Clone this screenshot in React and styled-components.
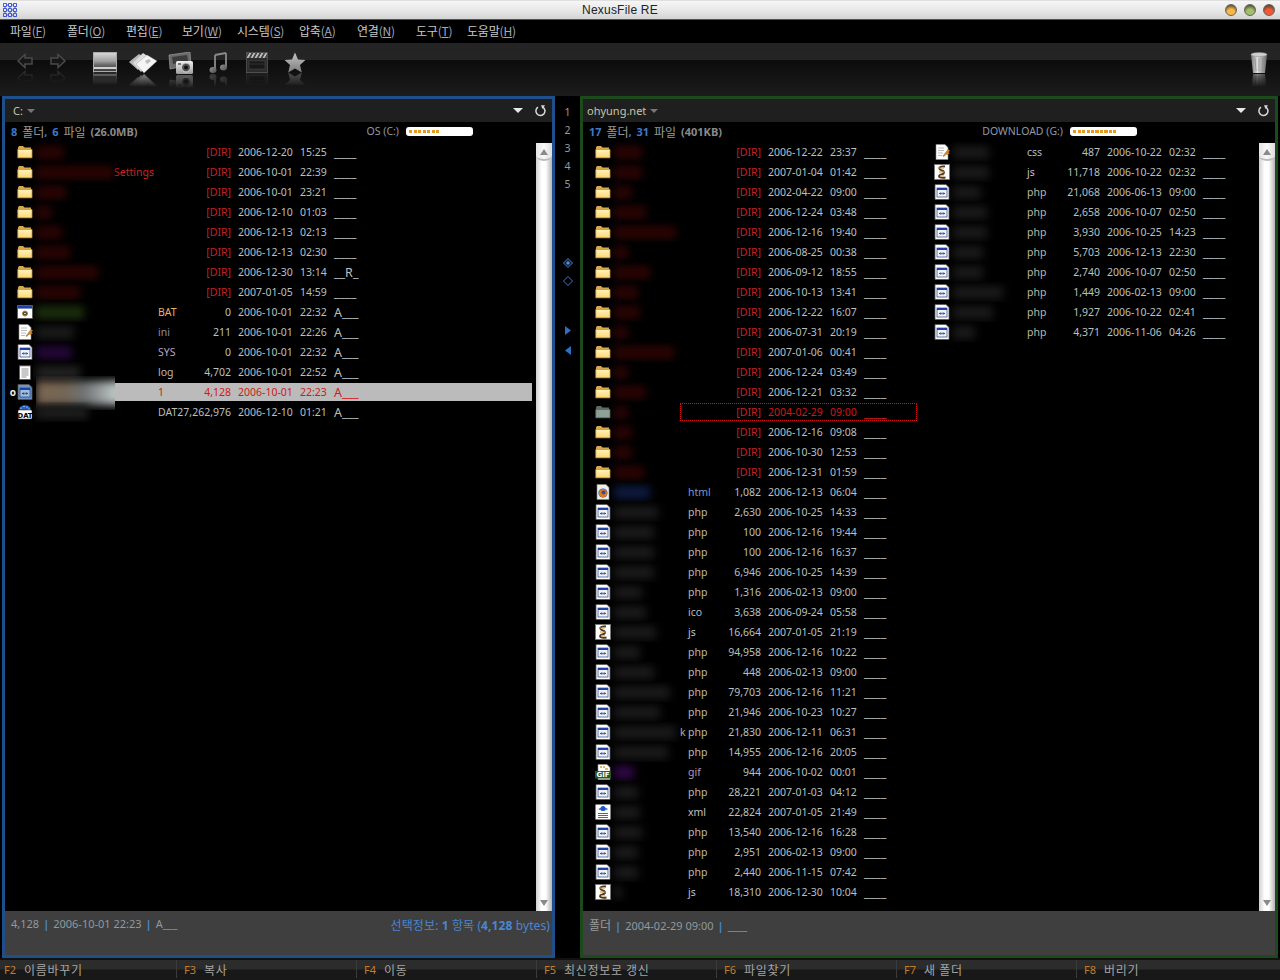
import React from "react";
import styled, { createGlobalStyle } from "styled-components";

const Global = createGlobalStyle`
  html, body { margin: 0; padding: 0; background: #000; }
  body { font-family: "Noto Sans", "Noto Sans CJK KR", sans-serif; font-size: 10.5px; color: #bbb; }
  #root { width: 1280px; height: 980px; overflow: hidden; }
  * { box-sizing: border-box; }
`;

const Win = styled.div`width:1280px;height:980px;display:flex;flex-direction:column;background:#000;`;
const TitleBar = styled.div`
  height:20px;flex:none;display:flex;align-items:center;justify-content:space-between;padding:0 5px 0 3px;position:relative;
  background:linear-gradient(#c8c8c8 0,#f6f6f6 1px,#e9e9e9 50%,#d4d4d4 100%);border-bottom:1px solid #555;
`;
const Title = styled.div`position:absolute;left:0;right:40px;top:3px;text-align:center;font:12px "Liberation Sans",sans-serif;letter-spacing:.2px;color:#222;`;
const WinBtns = styled.div`display:flex;gap:7px;`;
const WinBtn = styled.span`width:12px;height:12px;border-radius:50%;border:1px solid #665;background:radial-gradient(circle at 50% 80%,${p=>p.$c} 0,${p=>p.$c} 40%,#4a4030 90%);`;
const MenuBar = styled.div`height:23px;flex:none;display:flex;align-items:center;padding:0 0 2px 10px;background:#000;`;
const MenuItem = styled.div`width:${p=>p.$w}px;flex:none;font:12px "Noto Sans CJK KR","Noto Sans",sans-serif;color:#c8c8c8;letter-spacing:-.2px;white-space:nowrap;`;
const Mn = styled.span`color:#a0aab8;font-size:12px;u{text-underline-offset:1px;}`;
const Toolbar = styled.div`
  height:53px;flex:none;display:flex;align-items:flex-start;padding:9px 8px 0 8px;
  background:linear-gradient(#232323 0,#252525 17px,#0c0c0c 17px,#1c1c1c 100%);
`;
const Slot = styled.div`width:${p=>p.$w}px;flex:none;display:flex;flex-direction:column;align-items:center;`;
const Reflection = styled.div`
  height:14px;overflow:hidden;transform:scaleY(-1);opacity:.55;margin-top:-1px;
  mask-image:linear-gradient(to top,#000,transparent);-webkit-mask-image:linear-gradient(to top,#000,transparent);
  display:flex;align-items:flex-end;
`;
const Spacer = styled.div`width:${p=>p.$w}px;flex:none;`;
const Grow = styled.div`flex:1;`;
const Main = styled.div`flex:1;min-height:0;display:grid;grid-template-columns:553px 25px 698px;padding:0 2px;background:#000;`;
const Panel = styled.section`
  display:flex;flex-direction:column;min-height:0;border:3px solid ${p=>p.$c};background:#000;
`;
const PanelHead = styled.header`height:23px;flex:none;display:flex;align-items:center;padding:0 6px 0 ${p=>p.$pad}px;background:#1f1f1f;color:#c6c6a8;font-size:11px;`;
const Tri = styled.span`margin-left:4px;width:0;height:0;border-left:4px solid transparent;border-right:4px solid transparent;border-top:4px solid #777;`;
const BigTri = styled.span`margin-left:auto;margin-right:11px;width:0;height:0;border-left:5px solid transparent;border-right:5px solid transparent;border-top:5px solid #e8e8e8;`;
const Info = styled.div`height:20px;flex:none;display:flex;align-items:center;padding:0 0 2px 6px;background:#000;position:relative;font-size:11px;word-spacing:2px;`;
const KR = styled.span`color:#9a9a9a;font-family:"Noto Sans CJK KR",sans-serif;font-size:12px;`;
const Num = styled.b`color:#3f78cc;font-weight:700;`;
const Total = styled.b`color:#8a8a8a;font-weight:700;`;
const Drive = styled.div`margin-left:auto;margin-right:${p=>p.$mr}px;display:flex;align-items:center;color:#8f98a8;gap:7px;font-size:10.5px;word-spacing:0;`;
const DriveBar = styled.div`width:67px;height:9px;border-radius:3px;background:#fff;display:flex;align-items:center;padding:0 3px;`;
const DriveFill = styled.div`width:${p=>p.$w}px;height:3px;background:repeating-linear-gradient(90deg,#e49a20 0 3px,#fff 3px 4.5px);`;
const Body = styled.div`flex:1;min-height:0;display:flex;background:#000;`;
const List = styled.div`flex:1;min-width:0;display:flex;`;
const ListCol = styled.div`width:${p=>p.$w}px;flex:none;display:flex;flex-direction:column;`;
const Scroll = styled.div`
  width:16px;flex:none;margin-top:1px;display:flex;flex-direction:column;justify-content:space-between;align-items:center;padding:6px 0 5px;
  background:linear-gradient(90deg,#cfcfcf,#fff 35%,#fff 60%,#b4b4b4);
`;
const ScrollTop = styled.div`
  width:16px;height:18px;margin-top:-6px;padding-top:6px;display:flex;justify-content:center;border-bottom:2px solid #bbb;border-radius:0 0 50% 50%/0 0 5px 5px;
  background:linear-gradient(90deg,#e4e4e4,#f8f8f8 50%,#ddd);
`;
const UpTri = styled.span`width:0;height:0;border-left:4px solid transparent;border-right:4px solid transparent;border-bottom:6px solid #8a8a8a;`;
const DownTri = styled.span`width:0;height:0;border-left:4px solid transparent;border-right:4px solid transparent;border-top:6px solid #8a8a8a;`;
const Status = styled.footer`height:44px;flex:none;display:flex;align-items:flex-start;justify-content:space-between;padding:5px 2px 0 6px;background:#3f3f3f;color:#8d9aa0;font-size:11px;`;
const Sep = styled.b`color:#4c86c8;margin:0 4px;font-weight:700;`;
const SelInfo = styled.span`color:#4a86cf;font-size:12px;letter-spacing:.1px;font-family:"Noto Sans","Noto Sans CJK KR",sans-serif;b{font-weight:700;}`;
const Gutter = styled.aside`display:flex;flex-direction:column;align-items:center;padding:7px 0 0 0;color:#9a9a9a;font-size:10.5px;`;
const GutNum = styled.div`height:18px;line-height:18px;`;
const GutIcons = styled.div`margin-top:${p=>p.$mt}px;display:flex;flex-direction:column;align-items:center;gap:${p=>p.$gap}px;`;
const FnBar = styled.div`height:22px;flex:none;display:flex;padding:2px 0 2px;background:linear-gradient(#111 0,#111 2px,#2c2c2c 2px,#2c2c2c 11px,#181818 12px,#181818 100%);`;
const Fn = styled.div`
  width:${p=>p.$w}px;flex:none;display:flex;align-items:center;gap:8px;padding-left:${p=>p.$first?4:7}px;
  ${p=>p.$first?"":"border-left:1px solid #3a3a3a;"}font-size:12px;
`;
const FnKey = styled.span`color:#c67e26;font-size:11px;`;
const FnLabel = styled.span`color:#a4a4a4;font-family:"Noto Sans CJK KR",sans-serif;letter-spacing:.7px;`;

const RowWrap = styled.div`
  height:20px;flex:none;display:grid;position:relative;align-items:center;color:${p=>p.$selected?"#d01818":"#b9c0c0"};
  grid-template-columns:12px 16px ${p=>p.$name}px 18px 55px 69px 34px 1fr;
  ${p=>p.$selected?"background:linear-gradient(#bbb,#bbb) 110px 1px/calc(100% - 110px) 18px no-repeat;":""}
  ${p=>p.$current?"color:#d01818;":""}
`;
const Marker = styled.span`color:#eee;font-size:10px;font-weight:700;text-align:right;padding-right:1px;`;
const NameCell = styled.div`display:flex;align-items:center;height:20px;overflow:hidden;padding-left:3px;min-width:0;white-space:nowrap;`;
const Blob = styled.span`flex:none;display:block;width:${p=>p.$w}px;height:13px;background:${p=>p.$c};filter:blur(4px);`;
const SelClip = styled.div`position:absolute;left:31px;width:79px;top:-6px;bottom:-8px;overflow:hidden;display:flex;align-items:center;`;
const SelBlob = styled.span`flex:none;display:block;width:92px;height:24px;background:linear-gradient(90deg,#7c6654,#746654 30%,#6e7274 52%,#989c9c 70%,#bcc6c6 86%,#bbb);filter:blur(4px);`;
const Redtxt = styled.span`color:#d02420;`;
const Ext = styled.span`color:${p=>p.$c};white-space:nowrap;`;
const Size = styled.span`text-align:right;white-space:nowrap;color:${p=>p.$dir?"#c62020":"inherit"};`;
const DateCell = styled.span`padding-left:7px;white-space:nowrap;`;
const Time = styled.span`white-space:nowrap;`;
const Attr = styled.span`white-space:nowrap;font-size:12.5px;`;
const Cursor = styled.div`position:absolute;left:97px;right:5px;top:1px;bottom:1px;border:1px dotted #e01010;pointer-events:none;`;
const Stray = styled.span`position:absolute;left:97px;color:#aaa;`;

const Folder = ({dim}) => (
  <svg width="16" height="16" viewBox="0 0 16 16">
    <defs><linearGradient id="fo" x1="0" y1="0" x2="0" y2="1"><stop offset="0" stopColor="#fff4c0"/><stop offset="1" stopColor="#ffd870"/></linearGradient></defs>
    <path d="M1 3.500 L2 2 H6 L7.500 3.500 H14 V13.500 H1Z" fill={dim?"#5c6c60":"#d8a848"} />
    <path d="M.8 5.500 H15 V13.800 H.8Z" fill={dim?"#8ea096":"url(#fo)"} stroke={dim?"#56685c":"#c8963a"} strokeWidth=".8"/>
  </svg>
);
const Php = ({fade}) => (
  <svg width="16" height="16" viewBox="0 0 16 16">
    <path d="M1 .5H12L15 3.500V15.500H1Z" fill={fade?"#6f95c0":"#fff"} stroke="#555" strokeWidth=".8"/>
    <rect x="3" y="4" width="10" height="9" fill={fade?"#9fc0dc":"#f0f4fa"} stroke="#223a88" strokeWidth=".7"/>
    <rect x="3" y="4" width="10" height="2" fill="#1f3fa8"/>
    <path d="M5 9.500l1.600-1.200v2.400zM11 9.500l-1.600-1.200v2.400z" fill="#000"/>
    <circle cx="8" cy="9.500" r=".9" fill="#3060d0"/>
  </svg>
);
const Js = () => (
  <svg width="16" height="16" viewBox="0 0 16 16">
    <rect x=".5" y=".5" width="15" height="15" fill="#fff" stroke="#777" strokeWidth=".8"/>
    <path d="M11 2.500C6 2 4 4 6 5.500S11 7 10 9 5 10 5 12s4 2 6.500 1.500" fill="none" stroke="#4a3a28" strokeWidth="1.800"/>
    <path d="M4 4h6M5 8h6M6 12h4" stroke="#e09030" strokeWidth="1"/>
  </svg>
);
const Badge = ({label, bg}) => (
  <svg width="16" height="16" viewBox="0 0 16 16">
    <path d="M3 .5H12L15 3.500V15.500H3Z" fill="#fff" stroke="#999" strokeWidth=".6"/>
    <path d="M5 3h2M8 3h2M10 5h3" stroke="#e0a030" strokeWidth="1.400"/>
    <rect x="0" y="7" width="16" height="7.500" fill={bg}/>
    <text x="8" y="13.400" textAnchor="middle" fontSize="7" fontWeight="700" fontFamily="DejaVu Sans" fill="#fff">{label}</text>
  </svg>
);
const Dat = () => (
  <svg width="16" height="16" viewBox="0 0 16 16">
    <path d="M2 6a6 5 0 0 1 12 0z" fill="#2a62c0" stroke="#123" strokeWidth=".5"/>
    <path d="M4 4l.01 0M7 2.500l.01 0M10 3l.01 0M12 5l.01 0" stroke="#fff" strokeWidth="1.200" strokeLinecap="round"/>
    <rect x="1" y="6" width="14" height="9" rx="1" fill="#fff" stroke="#333" strokeWidth=".5"/>
    <text x="8" y="13.500" textAnchor="middle" fontSize="6.800" fontWeight="700" fontFamily="DejaVu Sans" fill="#000">DAT</text>
  </svg>
);
const Bat = () => (
  <svg width="16" height="16" viewBox="0 0 16 16">
    <rect x=".5" y="1.500" width="15" height="13" fill="#fff" stroke="#555" strokeWidth=".8"/>
    <rect x="1" y="2" width="14" height="2.600" fill="#1f3fa8"/>
    <circle cx="8" cy="9.500" r="2.500" fill="#443" stroke="#b98a2c" strokeWidth="1"/>
    <circle cx="8" cy="9.500" r=".8" fill="#fff"/>
  </svg>
);
const Ini = () => (
  <svg width="16" height="16" viewBox="0 0 16 16">
    <path d="M2 .5H11L14 3.500V15.500H2Z" fill="#fff" stroke="#888" strokeWidth=".6"/>
    <path d="M4 4h6M4 6.500h6M4 9h5M4 11.500h4" stroke="#aaa" strokeWidth=".8"/>
    <path d="M9 12l3-4 2-2.500 2 1-1.500 1.500 1 1.500-2 1-1.500-.5-2 2.500z" fill="#d88a20" stroke="#804f10" strokeWidth=".4"/>
  </svg>
);
const Log = () => (
  <svg width="16" height="16" viewBox="0 0 16 16">
    <rect x="2.500" y="1.500" width="11" height="14" fill="#fff" stroke="#555" strokeWidth=".7"/>
    <path d="M3 1v1.500M5 1v1.500M7 1v1.500M9 1v1.500M11 1v1.500M13 1v1.500" stroke="#222" strokeWidth=".8"/>
    <path d="M4.500 5h7M4.500 7h7M4.500 9h7M4.500 11h7M4.500 13h5" stroke="#777" strokeWidth=".8"/>
  </svg>
);
const Html = () => (
  <svg width="16" height="16" viewBox="0 0 16 16">
    <path d="M2 .5H11L14 3.500V15.500H2Z" fill="#eee" stroke="#888" strokeWidth=".6"/>
    <circle cx="8" cy="9" r="4.600" fill="#3a5fb0"/>
    <path d="M4 11c-.5-3 1-6 4-6 2 0 4 2 4 4 0 3-2 4-4 4.500-1.500 0-3-1-4-2.500z" fill="#e07a1c"/>
    <circle cx="8.500" cy="8.500" r="2" fill="#2f4fa0"/>
  </svg>
);
const Xml = () => (
  <svg width="16" height="16" viewBox="0 0 16 16">
    <rect x=".5" y=".5" width="15" height="15" fill="#fff"/>
    <text x="8" y="7" textAnchor="middle" fontSize="6" fontWeight="700" fontFamily="DejaVu Sans" fill="#1a4ec0">{"<"}{">"}</text>
    <circle cx="8" cy="4.500" r="2.500" fill="#1f55c8"/>
    <path d="M3 9.500h10M3 11.500h10M3 13.500h10" stroke="#1f55c8" strokeWidth=".9"/>
  </svg>
);
const ICONS = {
  folder:<Folder/>, dimfolder:<Folder dim/>, php:<Php/>, phpsel:<Php fade/>, js:<Js/>, gif:<Badge label="GIF" bg="#1f5a28"/>,
  dat:<Dat/>, bat:<Bat/>, ini:<Ini/>, log:<Log/>, html:<Html/>, xml:<Xml/>,
};

const IconBack = ({flip}) => (
  <svg width="18" height="18" viewBox="0 0 18 18">
    <g transform={flip?"translate(18,0) scale(-1,1)":""}>
      <path d="M2 9 9 2.500V6H16V12H9V15.500Z" fill="#161616" stroke="#4a4a4a" strokeWidth="1.500"/>
    </g>
  </svg>
);
const IconImage = () => (
  <svg width="24" height="20" viewBox="0 0 24 20">
    <defs><linearGradient id="im" x1="0" y1="0" x2="0" y2="1"><stop offset="0" stopColor="#d8d8d8"/><stop offset=".45" stopColor="#a0a0a0"/><stop offset=".65" stopColor="#686868"/><stop offset="1" stopColor="#383838"/></linearGradient></defs>
    <rect x=".5" y=".5" width="23" height="19" fill="url(#im)" stroke="#aaa"/>
    <rect x="1" y="15" width="22" height="2" fill="#cfcfcf"/>
  </svg>
);
const IconCards = () => (
  <svg width="30" height="22" viewBox="0 0 30 22">
    <path d="M1 10 11 2 19 7 10 18Z" fill="#b8b8b8"/>
    <path d="M5 11 15 1 24 7 13 20Z" fill="#dcdcdc"/>
    <path d="M8 12 19 3 29 9 16 21Z" fill="#f4f4f4" stroke="#999" strokeWidth=".4"/>
    <path d="M17 9l4-2 2 2-4 3z" fill="#bcbcbc"/>
  </svg>
);
const IconCamera = () => (
  <svg width="26" height="23" viewBox="0 0 26 23">
    <defs><linearGradient id="ca" x1="0" y1="0" x2="0" y2="1"><stop offset="0" stopColor="#f0f0f0"/><stop offset="1" stopColor="#9c9c9c"/></linearGradient></defs>
    <path d="M1 3 22 0 23 13 2 17Z" fill="#6a6a6a" stroke="#aaa" strokeWidth=".6"/>
    <path d="M4 5 19 3 20 9 5 12Z" fill="#3c3c3c"/>
    <rect x="8" y="9" width="17" height="13" rx="1.500" fill="url(#ca)"/>
    <circle cx="18" cy="15.500" r="4.500" fill="#555" stroke="#ddd"/>
    <circle cx="18" cy="15.500" r="2" fill="#111"/>
    <rect x="10" y="11" width="3" height="2" fill="#777"/>
  </svg>
);
const IconMusic = () => (
  <svg width="20" height="22" viewBox="0 0 20 22">
    <defs><linearGradient id="mu" x1="0" y1="0" x2="1" y2="1"><stop offset="0" stopColor="#909090"/><stop offset="1" stopColor="#505050"/></linearGradient></defs>
    <path d="M6 3V18M17 1V15M6 3 17 1" stroke="#8a8a8a" strokeWidth="1.800" fill="none"/>
    <ellipse cx="4" cy="18" rx="3.500" ry="3" fill="url(#mu)"/>
    <ellipse cx="14.500" cy="15.500" rx="3.500" ry="3" fill="url(#mu)"/>
  </svg>
);
const IconClapper = () => (
  <svg width="22" height="21" viewBox="0 0 22 21">
    <defs><pattern id="st" width="4" height="5" patternUnits="userSpaceOnUse" patternTransform="skewX(-30)"><rect width="2" height="5" fill="#bbb"/><rect x="2" width="2" height="5" fill="#444"/></pattern></defs>
    <rect x=".5" y=".5" width="21" height="20" fill="#2c2c2c" stroke="#666" strokeWidth=".6"/>
    <rect x="1" y="1" width="20" height="5" fill="url(#st)"/>
    <rect x="3" y="9" width="16" height="8" fill="#181818" stroke="#555" strokeWidth=".4"/>
    <path d="M3 12H19" stroke="#444" strokeWidth=".6"/>
  </svg>
);
const IconStar = () => (
  <svg width="22" height="21" viewBox="0 0 22 21">
    <defs><linearGradient id="sr" x1="0" y1="0" x2="0" y2="1"><stop offset="0" stopColor="#c4c4c4"/><stop offset="1" stopColor="#7c7c7c"/></linearGradient></defs>
    <path d="M11 .5 14 7.500 21.500 8 16 13 17.800 20.500 11 16.500 4.200 20.500 6 13 .5 8 8 7.500Z" fill="url(#sr)"/>
  </svg>
);
const IconTrash = () => (
  <svg width="18" height="22" viewBox="0 0 18 22">
    <defs><linearGradient id="tr" x1="0" y1="0" x2="1" y2="0"><stop offset="0" stopColor="#777"/><stop offset=".4" stopColor="#ddd"/><stop offset="1" stopColor="#666"/></linearGradient></defs>
    <path d="M1 3 3 21H15L17 3Z" fill="url(#tr)"/>
    <ellipse cx="9" cy="2.500" rx="8" ry="2" fill="#cfcfcf" stroke="#888" strokeWidth=".5"/>
    <path d="M5 6 6 19M9 6V19M13 6 12 19" stroke="#8a8a8a" strokeWidth=".7"/>
  </svg>
);
const Refresh = () => (
  <svg width="12" height="12" viewBox="0 0 12 12" fill="none">
    <path d="M4 2.200A4.500 4.500 0 1 0 8.500 2" stroke="#d8d8d8" strokeWidth="1.500"/>
    <path d="M7 0.200 11 .2 8.500 4Z" fill="#d8d8d8"/>
  </svg>
);
const Logo = () => (
  <svg width="14" height="14" viewBox="0 0 14 14" fill="none" stroke="#1530c8" strokeWidth="1">
    {[2,7,12].flatMap(y=>[2,7,12].map(x=><circle key={x+"-"+y} cx={x} cy={y} r="1.900"/>))}
  </svg>
);
const Diamond = ({filled}) => (
  <svg width="10" height="10" viewBox="0 0 10 10">
    <path d="M5 .5 9.500 5 5 9.500 .5 5Z" fill={filled?"#123":"none"} stroke="#3d78c8"/>
    {filled && <path d="M5 3 7 5 5 7 3 5Z" fill="#5a90d8"/>}
  </svg>
);
const Arrow = ({left}) => (
  <svg width="6" height="9" viewBox="0 0 6 9"><path d={left?"M6 0V9L0 4.500Z":"M0 0V9L6 4.500Z"} fill="#2f6fc0"/></svg>
);

const Tool = ({w, children}) => (
  <Slot $w={w}>
    {children}
    <Reflection>{children}</Reflection>
  </Slot>
);

const Row = ({name, r}) => {
  const dir = r.ext === undefined;
  return (
    <RowWrap $name={name} $selected={r.sel} $current={r.cur}>
      <Marker>{r.sel ? "o" : ""}</Marker>
      {ICONS[r.i || (dir ? "folder" : "php")]}
      <NameCell>
        {!r.sel && <Blob $w={r.w} $c={r.c || (dir ? "#2c0404" : "#1a1a1a")} />}
        {r.t && <Redtxt>{r.t}</Redtxt>}
      </NameCell>
      <Ext $c={r.ec || "#bdb8a8"}>{r.ext}</Ext>
      <Size $dir={dir}>{dir ? "[DIR]" : r.size}</Size>
      <DateCell>{r.d}</DateCell>
      <Time>{r.h}</Time>
      <Attr>{r.a || "____"}</Attr>
      {r.cur && <Cursor/>}
      {r.k && <Stray>k</Stray>}
      {r.sel && <SelClip><SelBlob/></SelClip>}
    </RowWrap>
  );
};

const L = [
  {w:28,d:"2006-12-20",h:"15:25"},
  {w:78,d:"2006-10-01",h:"22:39",t:"Settings"},
  {w:30,d:"2006-10-01",h:"23:21"},
  {w:16,d:"2006-12-10",h:"01:03"},
  {w:26,d:"2006-12-13",h:"02:13"},
  {w:34,d:"2006-12-13",h:"02:30"},
  {w:62,d:"2006-12-30",h:"13:14",a:"__R_"},
  {w:44,d:"2007-01-05",h:"14:59"},
  {w:48,c:"#1c2e0c",i:"bat",ext:"BAT",ec:"#e0b468",size:"0",d:"2006-10-01",h:"22:32",a:"A___"},
  {w:38,i:"ini",ext:"ini",ec:"#8e8ea4",size:"211",d:"2006-10-01",h:"22:26",a:"A___"},
  {w:36,c:"#240838",ext:"SYS",ec:"#b4a4c8",size:"0",d:"2006-10-01",h:"22:32",a:"A___"},
  {w:44,c:"#222",i:"log",ext:"log",ec:"#bbb",size:"4,702",d:"2006-10-01",h:"22:52",a:"A___"},
  {sel:true,i:"phpsel",ext:"1",ec:"#d01818",size:"4,128",d:"2006-10-01",h:"22:23",a:"A___"},
  {w:52,c:"#1e1e1e",i:"dat",ext:"DAT",ec:"#bbb",size:"27,262,976",d:"2006-12-10",h:"01:21",a:"A___"},
];
const Rr = [
  [28,"2006-12-22","23:37"],[28,"2007-01-04","01:42"],[18,"2002-04-22","09:00"],[32,"2006-12-24","03:48"],[62,"2006-12-16","19:40"],
  [14,"2006-08-25","00:38"],[36,"2006-09-12","18:55"],[24,"2006-10-13","13:41"],[26,"2006-12-22","16:07"],[14,"2006-07-31","20:19"],
  [60,"2007-01-06","00:41"],[14,"2006-12-24","03:49"],[32,"2006-12-21","03:32"],[14,"2004-02-29","09:00",true],[18,"2006-12-16","09:08"],
  [18,"2006-10-30","12:53"],[30,"2006-12-31","01:59"],
].map(([w,d,h,cur])=>({w,d,h,cur,i:cur?"dimfolder":"folder"}));
const f = (ext,size,d,h,w,extra={}) => ({ext,size,d,h,w,i:ext==="php"?"php":ext==="ico"?"php":ext,...extra});
const R1 = [...Rr,
  f("html","1,082","2006-12-13","06:04",36,{c:"#0e1a40",ec:"#7a98c8"}),
  f("php","2,630","2006-10-25","14:33",44),
  f("php","100","2006-12-16","19:44",40),
  f("php","100","2006-12-16","16:37",40),
  f("php","6,946","2006-10-25","14:39",40),
  f("php","1,316","2006-02-13","09:00",28),
  f("ico","3,638","2006-09-24","05:58",32,{ec:"#bbb"}),
  f("js","16,664","2007-01-05","21:19",42,{ec:"#c4c4c4"}),
  f("php","94,958","2006-12-16","10:22",26),
  f("php","448","2006-02-13","09:00",40),
  f("php","79,703","2006-12-16","11:21",56),
  f("php","21,946","2006-10-23","10:27",46),
  f("php","21,830","2006-12-11","06:31",62,{k:true}),
  f("php","14,955","2006-12-16","20:05",54),
  f("gif","944","2006-10-02","00:01",20,{c:"#300848",ec:"#b498b4"}),
  f("php","28,221","2007-01-03","04:12",24),
  f("xml","22,824","2007-01-05","21:49",26,{ec:"#c0c0c0"}),
  f("php","13,540","2006-12-16","16:28",28),
  f("php","2,951","2006-02-13","09:00",24),
  f("php","2,440","2006-11-15","07:42",24),
  f("js","18,310","2006-12-30","10:04",8,{ec:"#c4c4c4"}),
];
const R2 = [
  f("css","487","2006-10-22","02:32",36,{i:"ini",ec:"#bbb"}),
  f("js","11,718","2006-10-22","02:32",36,{ec:"#c4c4c4"}),
  f("php","21,068","2006-06-13","09:00",28),
  f("php","2,658","2006-10-07","02:50",34),
  f("php","3,930","2006-10-25","14:23",34),
  f("php","5,703","2006-12-13","22:30",30),
  f("php","2,740","2006-10-07","02:50",30),
  f("php","1,449","2006-02-13","09:00",50),
  f("php","1,927","2006-10-22","02:41",40),
  f("php","4,371","2006-11-06","04:26",22),
];

const MENU = [["파일","F",57],["폴더","O",59],["편집","E",56],["보기","W",55],["시스템","S",62],["압축","A",58],["연결","N",59],["도구","T",51],["도움말","H",60]];
const FN = [["F2","이름바꾸기",176],["F3","복사",180],["F4","이동",180],["F5","최신정보로 갱신",180],["F6","파일찾기",180],["F7","새 폴더",180],["F8","버리기",196]];

const Scrollbar = () => (
  <Scroll>
    <ScrollTop><UpTri/></ScrollTop>
    <DownTri/>
  </Scroll>
);

export default function App() {
  return (
    <Win>
      <Global/>
      <TitleBar>
        <Logo/>
        <Title>NexusFile RE</Title>
        <WinBtns>
          <WinBtn $c="#f8b848"/><WinBtn $c="#a0c070"/><WinBtn $c="#f05838"/>
        </WinBtns>
      </TitleBar>
      <MenuBar>
        {MENU.map(([t,k,w])=>(
          <MenuItem key={k} $w={w}>{t}<Mn>(<u>{k}</u>)</Mn></MenuItem>
        ))}
      </MenuBar>
      <Toolbar>
        <Tool w={33}><IconBack/></Tool>
        <Tool w={33}><IconBack flip/></Tool>
        <Spacer $w={12}/>
        <Tool w={38}><IconImage/></Tool>
        <Tool w={38}><IconCards/></Tool>
        <Tool w={38}><IconCamera/></Tool>
        <Tool w={38}><IconMusic/></Tool>
        <Tool w={38}><IconClapper/></Tool>
        <Tool w={38}><IconStar/></Tool>
        <Grow/>
        <Tool w={26}><IconTrash/></Tool>
      </Toolbar>
      <Main>
        <Panel $c="#1f4f8a">
          <PanelHead $pad={8}>C:<Tri/><BigTri/><Refresh/></PanelHead>
          <Info>
            <Num>8</Num>&nbsp;<KR>폴더</KR><Num>,</Num>&nbsp;<Num>6</Num>&nbsp;<KR>파일</KR>&nbsp;<Total>(26.0MB)</Total>
            <Drive $mr={79}>OS (C:)<DriveBar><DriveFill $w={31}/></DriveBar></Drive>
          </Info>
          <Body>
            <List><ListCol $w={527}>{L.map((r,i)=><Row key={i} name={125} r={r}/>)}</ListCol></List>
            <Scrollbar/>
          </Body>
          <Status>
            <span>4,128<Sep>|</Sep>2006-10-01 22:23<Sep>|</Sep>A___</span>
            <SelInfo>선택정보: <b>1</b> 항목 (<b>4,128</b> bytes)</SelInfo>
          </Status>
        </Panel>
        <Gutter>
          {[1,2,3,4,5].map(n=><GutNum key={n}>{n}</GutNum>)}
          <GutIcons $mt={65} $gap={8}><Diamond filled/><Diamond/></GutIcons>
          <GutIcons $mt={40} $gap={11}><Arrow/><Arrow left/></GutIcons>
        </Gutter>
        <Panel $c="#1c4a1c">
          <PanelHead $pad={4}>ohyung.net<Tri/><BigTri/><Refresh/></PanelHead>
          <Info>
            <Num>17</Num>&nbsp;<KR>폴더</KR><Num>,</Num>&nbsp;<Num>31</Num>&nbsp;<KR>파일</KR>&nbsp;<Total>(401KB)</Total>
            <Drive $mr={138}>DOWNLOAD (G:)<DriveBar><DriveFill $w={44}/></DriveBar></Drive>
          </Info>
          <Body>
            <List>
              <ListCol $w={339}>{R1.map((r,i)=><Row key={i} name={77} r={r}/>)}</ListCol>
              <ListCol $w={337}>{R2.map((r,i)=><Row key={i} name={77} r={r}/>)}</ListCol>
            </List>
            <Scrollbar/>
          </Body>
          <Status>
            <span><KR>폴더</KR><Sep>|</Sep>2004-02-29 09:00<Sep>|</Sep>____</span>
          </Status>
        </Panel>
      </Main>
      <FnBar>
        {FN.map(([k,t,w],i)=>(
          <Fn key={k} $w={w} $first={i===0}><FnKey>{k}</FnKey><FnLabel>{t}</FnLabel></Fn>
        ))}
      </FnBar>
    </Win>
  );
}
